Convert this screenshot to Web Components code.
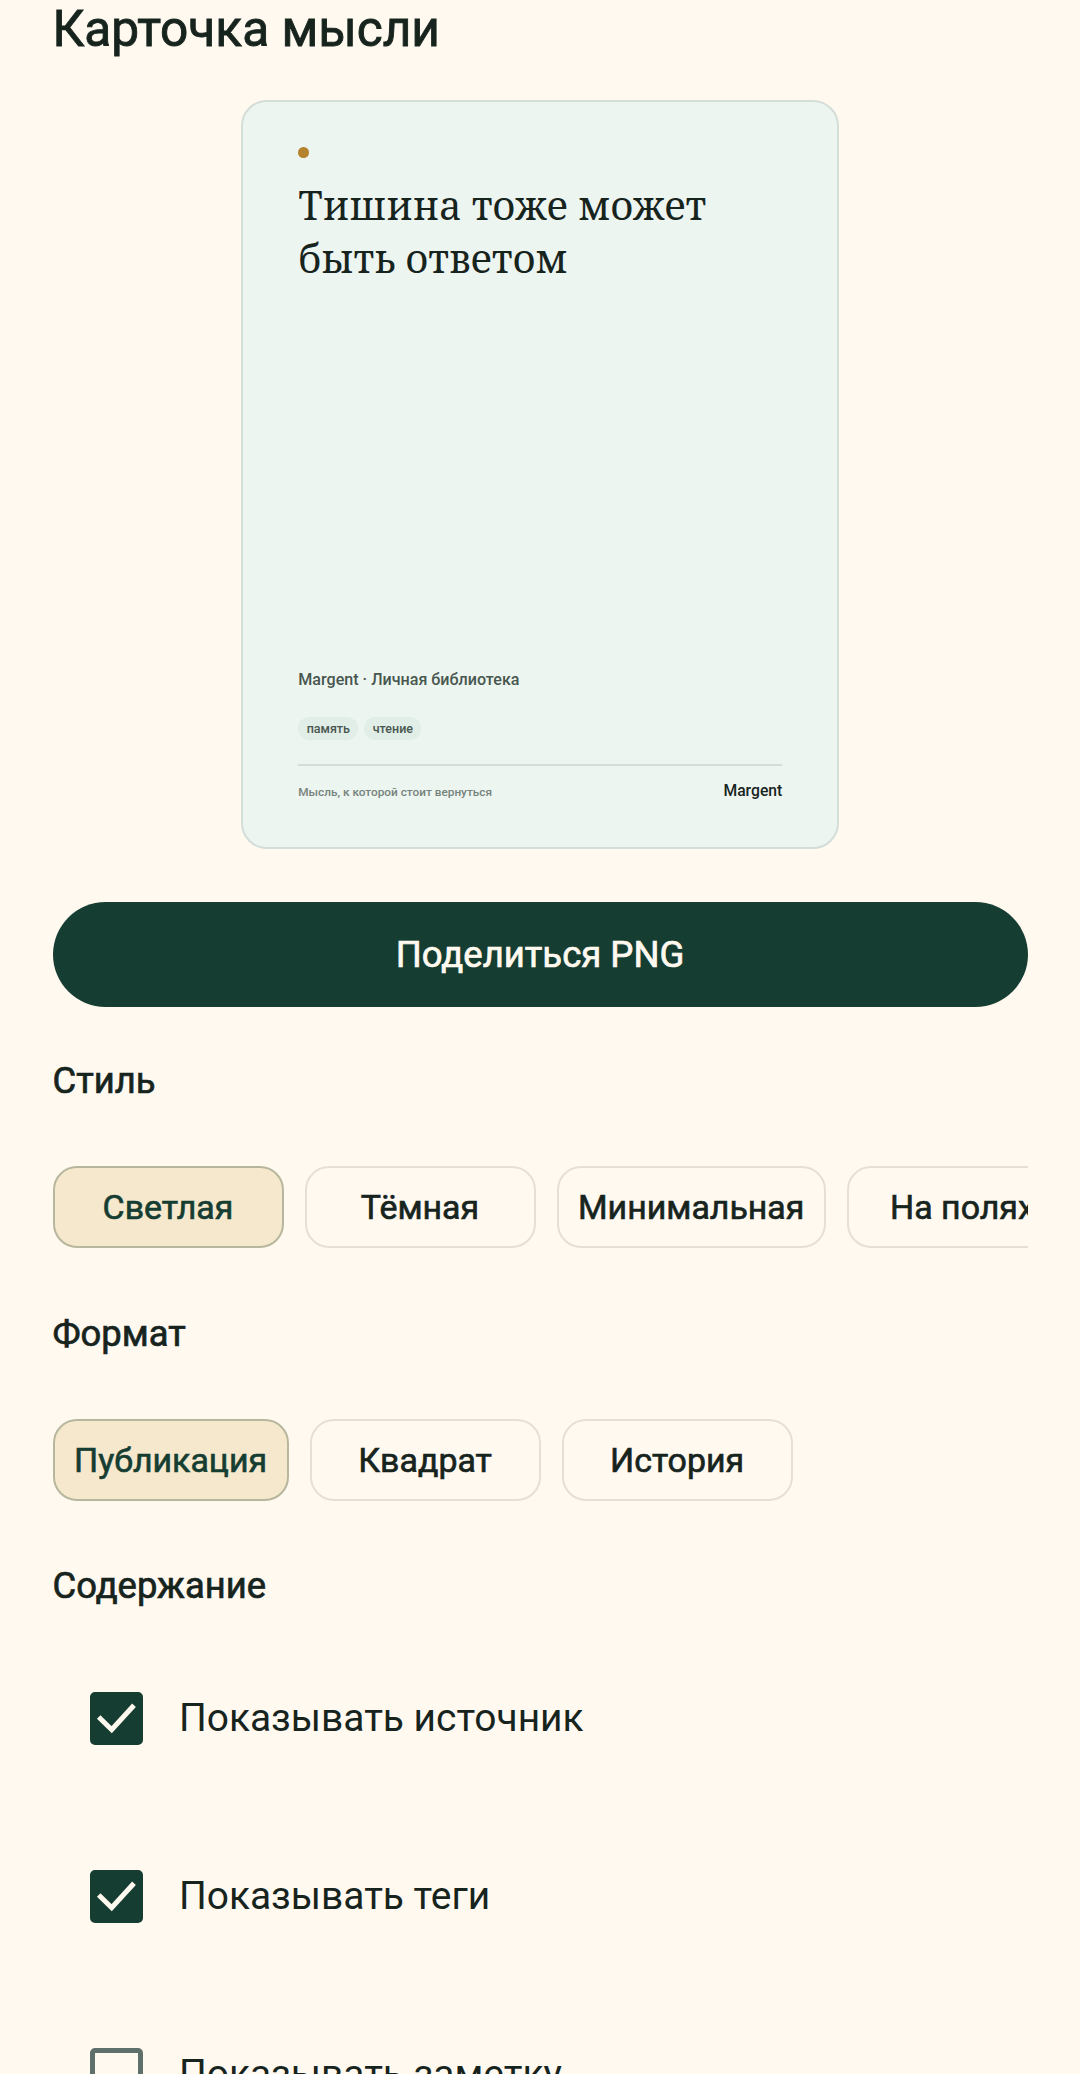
<!doctype html>
<html lang="ru"><head><meta charset="utf-8"><title>Карточка мысли</title>
<style>
html,body{margin:0;padding:0;height:2074px;overflow:hidden;background:#FFF9F0;}
body{font-family:Roboto,"Noto Sans",sans-serif;color:#17241E;}
</style></head><body>
<share-page>
  <span slot="title">Карточка мысли</span>
  <thought-card slot="card" title-text="Тишина тоже может быть ответом" source="Margent · Личная библиотека" tags="память,чтение" tagline="Мысль, к которой стоит вернуться" brand="Margent"></thought-card>
  <primary-button slot="action">Поделиться PNG</primary-button>
  <option-group slot="groups" first label="Стиль">
    <choice-chip selected>Светлая</choice-chip>
    <choice-chip>Тёмная</choice-chip>
    <choice-chip>Минимальная</choice-chip>
    <choice-chip>На полях</choice-chip>
  </option-group>
  <option-group slot="groups" label="Формат">
    <choice-chip selected>Публикация</choice-chip>
    <choice-chip>Квадрат</choice-chip>
    <choice-chip>История</choice-chip>
  </option-group>
  <section-title slot="groups">Содержание</section-title>
  <check-row slot="checks" checked>Показывать источник</check-row>
  <check-row slot="checks" checked>Показывать теги</check-row>
  <check-row slot="checks">Показывать заметку</check-row>
</share-page>
<script>
function def(name, css, html, init){
  customElements.define(name, class extends HTMLElement{
    constructor(){super();const s=this.attachShadow({mode:'open'});s.innerHTML='<style>'+css+'</style>'+html;}
    connectedCallback(){if(init)init.call(this,this.shadowRoot);}
  });
}
def('share-page',`
  :host{display:flex;flex-direction:column;padding:0 52.5px;box-sizing:border-box;width:1080px;}
  h1{margin:0;padding-top:1px;font:400 49.6px/57px Roboto,sans-serif;-webkit-text-stroke:.9px currentColor;color:#17241E;}
  .card{display:flex;justify-content:center;margin-top:42px;}
  .action{display:block;margin-top:53.5px;}
  .groups{display:block;}
  .checks{display:block;padding-top:22.2px;}
`,`<h1><slot name="title"></slot></h1>
<div class="card"><slot name="card"></slot></div>
<div class="action"><slot name="action"></slot></div>
<div class="groups"><slot name="groups"></slot></div>
<div class="checks"><slot name="checks"></slot></div>`);

def('thought-card',`
  :host{display:flex;flex-direction:column;box-sizing:border-box;width:598.5px;height:748.5px;background:#EDF5F0;border:2.6px solid #D3DED9;border-radius:26px;padding:45px 55px 42.5px 55.5px;}
  .dot{width:10.5px;height:10.5px;border-radius:50%;background:#B5832D;}
  .t{margin:21px 0 0;font:400 39.3px/53px "Noto Serif","DejaVu Serif","Liberation Serif",serif;color:#17241E;}
  .sp{flex:1;}
  .src{font:500 16.1px/22px Roboto,sans-serif;color:#48574F;}
  .tags{display:flex;gap:6px;margin-top:26.7px;}
  .tag{height:23px;padding:0 8.4px;border-radius:12px;background:#E1EDE7;font:500 12.5px/23px Roboto,sans-serif;color:#48574F;}
  .foot{display:flex;justify-content:space-between;align-items:center;border-top:2px solid #D3DED9;margin-top:24px;padding-top:11.6px;}
  .tl{font:500 11.8px/24px Roboto,sans-serif;color:#75837C;padding-top:2px;}
  .br{font:500 15.7px/24px Roboto,sans-serif;color:#17241E;}
`,`<div class="dot"></div><p class="t"></p><div class="sp"></div><div class="src"></div><div class="tags"></div>
<div class="foot"><span class="tl"></span><span class="br"></span></div>`,function(s){
  s.querySelector('.t').textContent=this.getAttribute('title-text');
  s.querySelector('.src').textContent=this.getAttribute('source');
  s.querySelector('.tl').textContent=this.getAttribute('tagline');
  s.querySelector('.br').textContent=this.getAttribute('brand');
  const w=s.querySelector('.tags');w.innerHTML='';
  this.getAttribute('tags').split(',').forEach(t=>{const e=document.createElement('span');e.className='tag';e.textContent=t;w.appendChild(e);});
});

def('primary-button',`
  :host{display:flex;align-items:center;justify-content:center;height:105px;border-radius:53px;background:#163D31;color:#FFF9F0;font:400 36.5px/44px Roboto,sans-serif;-webkit-text-stroke:.7px currentColor;}
`,`<slot></slot>`);

def('section-title',`
  :host{display:block;margin-top:64.3px;font:400 36.4px/42px Roboto,sans-serif;-webkit-text-stroke:.7px currentColor;color:#17241E;}
`,`<slot></slot>`);

def('option-group',`
  :host{display:block;}
  h2{margin:65px 0 0;font:400 36.4px/42px Roboto,sans-serif;-webkit-text-stroke:.7px currentColor;color:#17241E;}
  :host([first]) h2{margin-top:53px;}
  .row{display:flex;gap:21px;margin-top:64px;overflow:hidden;}
`,`<h2></h2><div class="row"><slot></slot></div>`,function(s){s.querySelector('h2').textContent=this.getAttribute('label');});

def('choice-chip',`
  :host{display:flex;flex:none;box-sizing:border-box;align-items:center;justify-content:center;min-width:231px;height:82px;padding:1.5px 19.5px 0;border-radius:24px;border:2.6px solid #E4E1D4;background:transparent;font:400 33.9px/42px Roboto,sans-serif;-webkit-text-stroke:.65px currentColor;color:#17241E;white-space:nowrap;}
  :host([selected]){background:#F5E8CD;border-color:#B6B79D;color:#163D31;}
`,`<slot></slot>`);

def('check-row',`
  :host{display:flex;align-items:center;gap:36px;padding-left:37.5px;height:178px;font:400 38.9px/48px Roboto,sans-serif;color:#17241E;}
  .box{flex:none;box-sizing:border-box;width:53px;height:53px;border-radius:5px;border:5px solid #5F6F69;background:transparent;display:flex;}
  svg{display:none;width:53px;height:53px;margin:-5px;}
  :host([checked]) .box{background:#163D31;border-color:#163D31;}
  :host([checked]) svg{display:block;}
`,`<span class="box"><svg viewBox="0 0 53 53"><path d="M8.7 25 L21.7 37.7 L44 13.3" fill="none" stroke="#FFF9F0" stroke-width="5"/></svg></span><span><slot></slot></span>`);
</script>
</body></html>
